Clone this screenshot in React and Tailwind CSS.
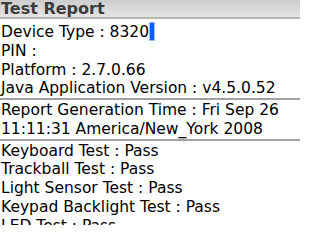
import React from "react";

const Sep = () => <div className="h-[3px] border-t-2 border-[#a2a2a2]" />;

const Row = ({ children }) => <div className="whitespace-nowrap">{children}</div>;

const App = () => {
    return (
        <div className="w-[300px] h-[225px] overflow-hidden bg-white text-black font-['DejaVu_Sans',sans-serif]">
            {/* title bar */}
            <div className="h-[19px] bg-gradient-to-b from-[#cdcdcd] to-[#e4e4e4] border-b-2 border-[#b3b9b1] pl-[1px] pt-[1px]">
                <div className="text-[16px] font-bold text-[#3c3c3c] leading-[16px]">Test Report</div>
            </div>
            <div className="text-[15.5px] leading-[18.75px] pl-[1px] pt-[4px]">
                <div className="flex whitespace-nowrap">
                    <span>Device Type : 8320</span>
                    <span className="block w-[6px] h-[19px] -mt-[1px] bg-[#0b5ff0] border border-[#9cc0f7]" />
                </div>
                <Row>PIN :</Row>
                <Row>Platform : 2.7.0.66</Row>
                <Row>Java Application Version : v4.5.0.52</Row>
            </div>
            <Sep />
            <div className="text-[15.5px] leading-[18.75px] pl-[1px]">
                <Row>Report Generation Time : Fri Sep 26</Row>
                <Row>11:11:31 America/New_York 2008</Row>
            </div>
            <Sep />
            <div className="text-[15.5px] leading-[18.75px] pl-[1px]">
                <Row>Keyboard Test : Pass</Row>
                <Row>Trackball Test : Pass</Row>
                <Row>Light Sensor Test : Pass</Row>
                <Row>Keypad Backlight Test : Pass</Row>
                <Row>LED Test : Pass</Row>
            </div>
        </div>
    );
};

export default App;
